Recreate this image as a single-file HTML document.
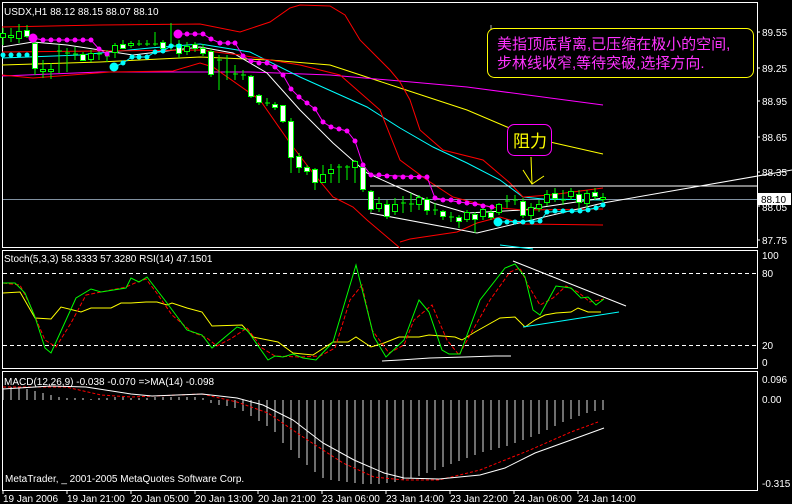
<!DOCTYPE html>
<html><head><meta charset="utf-8"><style>
html,body{margin:0;padding:0;background:#000;}
svg{display:block}
text{font-family:"Liberation Sans","Noto Sans CJK SC",sans-serif;fill:#fff;font-size:10px}
</style></head><body>
<svg width="792" height="504" viewBox="0 0 792 504" xmlns="http://www.w3.org/2000/svg">
<rect width="792" height="504" fill="#000"/>
<!-- frames -->
<g fill="none" stroke="#fff" stroke-width="1">
<rect x="2.5" y="2.5" width="755" height="245"/>
<rect x="2.5" y="250.5" width="755" height="118"/>
<rect x="2.5" y="371.5" width="755" height="119"/>
</g>
<!-- price axis ticks/labels -->
<g stroke="#fff"><line x1="757" y1="32" x2="760" y2="32"/><line x1="757" y1="68" x2="760" y2="68"/><line x1="757" y1="101" x2="760" y2="101"/><line x1="757" y1="137" x2="760" y2="137"/><line x1="757" y1="172" x2="760" y2="172"/><line x1="757" y1="206" x2="760" y2="206"/><line x1="757" y1="240" x2="760" y2="240"/></g>
<text x="762" y="36">89.55</text><text x="762" y="72">89.25</text><text x="762" y="105">88.95</text><text x="762" y="141">88.65</text><text x="762" y="176">88.35</text><text x="762" y="211">88.05</text><text x="762" y="244">87.75</text>
<text x="4" y="15" font-size="10">USDX,H1  88.12 88.15 88.07 88.10</text>

<!-- gray price line -->
<line x1="3" y1="199.5" x2="757" y2="199.5" stroke="#8090a0"/>
<rect x="758" y="193" width="33" height="12" fill="#fff"/>
<text x="761" y="203" style="fill:#000">88.10</text>

<!-- MAs -->
<g fill="none" stroke-width="1">
<polyline stroke="#ffff00" points="2,65 100,62 200,57 270,60 330,65 400,88 467,110 507,127 550,142 603,154"/>
<polyline stroke="#ff00ff" points="2,76 100,72 250,72 330,75 400,81 467,87 603,105"/>
<polyline stroke="#00ffff" points="2,58 80,55 150,48 200,44 250,52 300,77 367,107 400,128 433,147 467,163 500,180 523,197 543,199 603,200"/>
<polyline stroke="#ffffff" points="2,47 33,42 67,45 133,55 200,47 233,53 267,73 300,110 333,143 367,173 400,188 433,203 467,213 523,210 603,198"/>
<polyline stroke="#ff0000" points="2,27 100,25 200,24 240,32 270,22 290,8 300,5 330,6 345,15 360,40 390,70 400,82 410,100 420,130 443,150 483,160 510,183 523,197 550,195 603,188"/>
<polyline stroke="#ff0000" points="2,52 100,51 200,50 240,55 300,65 340,75 380,110 400,160 427,180 453,197 490,207 523,210 603,209"/>
<polyline stroke="#ff0000" points="2,75 33,78 110,72 173,71 200,63 213,67 260,100 290,143 313,173 333,197 353,207 367,220 400,248"/>
<polyline stroke="#ff0000" points="400,242 410,239 457,232 477,223 500,217 523,224 603,225"/>
<!-- white trendlines -->
<polyline stroke="#fff" points="370,186 757,186"/>
<polyline stroke="#fff" points="370,213 477,233"/>
<polyline stroke="#fff" points="477,233 603,203 792,170"/>
<polyline stroke="#00ffff" points="500,245 533,249"/>
</g>

<!-- candles -->
<g stroke="#00ff00" stroke-width="1">
<line x1="3" y1="28" x2="3" y2="45"/><rect x="0.5" y="33.5" width="5" height="4" fill="#000"/>
<line x1="11" y1="28" x2="11" y2="42"/><rect x="8.5" y="35.5" width="5" height="2" fill="#000"/>
<line x1="19" y1="24" x2="19" y2="43"/><rect x="16.5" y="31.5" width="5" height="7" fill="#000"/>
<line x1="27" y1="25" x2="27" y2="38"/><rect x="24.5" y="30.5" width="5" height="6" fill="#fff"/>
<line x1="35" y1="38" x2="35" y2="75"/><rect x="32.5" y="43.5" width="5" height="25" fill="#fff"/>
<line x1="43" y1="60" x2="43" y2="78"/><rect x="40.5" y="69.5" width="5" height="2" fill="#000"/>
<line x1="51" y1="63" x2="51" y2="79"/><rect x="48.5" y="69.5" width="5" height="2" fill="#000"/>
<line x1="59" y1="45" x2="59" y2="73"/><line x1="57" y1="51" x2="62" y2="51"/>
<line x1="67" y1="48" x2="67" y2="72"/><line x1="65" y1="53" x2="70" y2="53"/>
<line x1="75" y1="47" x2="75" y2="60"/><line x1="73" y1="54" x2="78" y2="54"/>
<line x1="83" y1="52" x2="83" y2="60"/><rect x="80.5" y="54.5" width="5" height="6" fill="#fff"/>
<line x1="91" y1="50" x2="91" y2="62"/><rect x="88.5" y="53.5" width="5" height="6" fill="#000"/>
<line x1="99" y1="48" x2="99" y2="60"/><line x1="97" y1="54" x2="102" y2="54"/>
<line x1="107" y1="50" x2="107" y2="62"/><line x1="105" y1="56" x2="110" y2="56"/>
<line x1="115" y1="43" x2="115" y2="58"/><rect x="112.5" y="45.5" width="5" height="7" fill="#000"/>
<line x1="123" y1="40" x2="123" y2="48"/><rect x="120.5" y="44.5" width="5" height="4" fill="#fff"/>
<line x1="131" y1="41" x2="131" y2="48"/><rect x="128.5" y="43.5" width="5" height="2" fill="#000"/>
<line x1="139" y1="40" x2="139" y2="46"/><line x1="137" y1="44" x2="142" y2="44"/>
<line x1="147" y1="40" x2="147" y2="46"/><line x1="145" y1="44" x2="150" y2="44"/>
<line x1="155" y1="32" x2="155" y2="46"/><line x1="153" y1="44" x2="158" y2="44"/>
<line x1="163" y1="40" x2="163" y2="50"/><rect x="160.5" y="42.5" width="5" height="6" fill="#fff"/>
<line x1="171" y1="23" x2="171" y2="50"/><line x1="169" y1="45" x2="174" y2="45"/>
<line x1="179" y1="40" x2="179" y2="58"/><rect x="176.5" y="44.5" width="5" height="9" fill="#fff"/>
<line x1="187" y1="42" x2="187" y2="55"/><rect x="184.5" y="46.5" width="5" height="5" fill="#000"/>
<line x1="195" y1="42" x2="195" y2="52"/><rect x="192.5" y="44.5" width="5" height="4" fill="#fff"/>
<line x1="203" y1="44" x2="203" y2="56"/><rect x="200.5" y="48.5" width="5" height="5" fill="#fff"/>
<line x1="211" y1="48" x2="211" y2="77"/><rect x="208.5" y="51.5" width="5" height="23" fill="#fff"/>
<line x1="219" y1="55" x2="219" y2="90"/><line x1="217" y1="60" x2="222" y2="60"/>
<line x1="227" y1="55" x2="227" y2="80"/><line x1="225" y1="72" x2="230" y2="72"/>
<line x1="235" y1="65" x2="235" y2="80"/><line x1="233" y1="74" x2="238" y2="74"/>
<line x1="243" y1="70" x2="243" y2="80"/><line x1="241" y1="75" x2="246" y2="75"/>
<line x1="251" y1="75" x2="251" y2="98"/><rect x="248.5" y="76.5" width="5" height="20" fill="#fff"/>
<line x1="259" y1="94" x2="259" y2="105"/><rect x="256.5" y="95.5" width="5" height="7" fill="#fff"/>
<line x1="267" y1="98" x2="267" y2="106"/><line x1="265" y1="103" x2="270" y2="103"/>
<line x1="275" y1="102" x2="275" y2="110"/><rect x="272.5" y="104.5" width="5" height="3" fill="#fff"/>
<line x1="283" y1="105" x2="283" y2="123"/><rect x="280.5" y="105.5" width="5" height="16" fill="#fff"/>
<line x1="291" y1="118" x2="291" y2="173"/><rect x="288.5" y="121.5" width="5" height="36" fill="#fff"/>
<line x1="299" y1="153" x2="299" y2="173"/><rect x="296.5" y="156.5" width="5" height="11" fill="#fff"/>
<line x1="307" y1="165" x2="307" y2="175"/><rect x="304.5" y="167.5" width="5" height="4" fill="#fff"/>
<line x1="315" y1="168" x2="315" y2="190"/><rect x="312.5" y="169.5" width="5" height="13" fill="#fff"/>
<line x1="323" y1="165" x2="323" y2="183"/><rect x="320.5" y="174.5" width="5" height="8" fill="#000"/>
<line x1="331" y1="164" x2="331" y2="183"/><rect x="328.5" y="169.5" width="5" height="4" fill="#000"/>
<line x1="339" y1="164" x2="339" y2="183"/><line x1="337" y1="167" x2="342" y2="167"/>
<line x1="347" y1="165" x2="347" y2="180"/><line x1="345" y1="167" x2="350" y2="167"/>
<line x1="355" y1="160" x2="355" y2="183"/><rect x="352.5" y="161.5" width="5" height="6" fill="#000"/>
<line x1="363" y1="165" x2="363" y2="192"/><rect x="360.5" y="167.5" width="5" height="22" fill="#fff"/>
<line x1="371" y1="190" x2="371" y2="212"/><rect x="368.5" y="191.5" width="5" height="18" fill="#fff"/>
<line x1="379" y1="197" x2="379" y2="212"/><rect x="376.5" y="203.5" width="5" height="5" fill="#000"/>
<line x1="387" y1="200" x2="387" y2="219"/><rect x="384.5" y="204.5" width="5" height="12" fill="#fff"/>
<line x1="395" y1="198" x2="395" y2="215"/><rect x="392.5" y="204.5" width="5" height="7" fill="#000"/>
<line x1="403" y1="196" x2="403" y2="213"/><line x1="401" y1="203" x2="406" y2="203"/>
<line x1="411" y1="193" x2="411" y2="212"/><line x1="409" y1="204" x2="414" y2="204"/>
<line x1="419" y1="195" x2="419" y2="210"/><rect x="416.5" y="197.5" width="5" height="7" fill="#000"/>
<line x1="427" y1="197" x2="427" y2="215"/><rect x="424.5" y="199.5" width="5" height="11" fill="#fff"/>
<line x1="435" y1="203" x2="435" y2="215"/><line x1="433" y1="210" x2="438" y2="210"/>
<line x1="443" y1="210" x2="443" y2="220"/><rect x="440.5" y="211.5" width="5" height="5" fill="#fff"/>
<line x1="451" y1="212" x2="451" y2="222"/><line x1="449" y1="217" x2="454" y2="217"/>
<line x1="459" y1="215" x2="459" y2="228"/><rect x="456.5" y="217.5" width="5" height="4" fill="#fff"/>
<line x1="467" y1="210" x2="467" y2="222"/><rect x="464.5" y="212.5" width="5" height="7" fill="#000"/>
<line x1="475" y1="212" x2="475" y2="233"/><rect x="472.5" y="214.5" width="5" height="5" fill="#fff"/>
<line x1="483" y1="207" x2="483" y2="220"/><rect x="480.5" y="209.5" width="5" height="7" fill="#000"/>
<line x1="491" y1="208" x2="491" y2="220"/><rect x="488.5" y="212.5" width="5" height="5" fill="#fff"/>
<line x1="499" y1="203" x2="499" y2="215"/><rect x="496.5" y="204.5" width="5" height="8" fill="#000"/>
<line x1="507" y1="195" x2="507" y2="208"/><line x1="505" y1="201" x2="510" y2="201"/>
<line x1="515" y1="195" x2="515" y2="205"/><line x1="513" y1="200" x2="518" y2="200"/>
<line x1="523" y1="198" x2="523" y2="218"/><rect x="520.5" y="201.5" width="5" height="14" fill="#fff"/>
<line x1="531" y1="203" x2="531" y2="220"/><rect x="528.5" y="207.5" width="5" height="8" fill="#000"/>
<line x1="539" y1="200" x2="539" y2="212"/><rect x="536.5" y="204.5" width="5" height="4" fill="#000"/>
<line x1="547" y1="190" x2="547" y2="206"/><rect x="544.5" y="194.5" width="5" height="8" fill="#000"/>
<line x1="555" y1="188" x2="555" y2="202"/><rect x="552.5" y="193.5" width="5" height="5" fill="#fff"/>
<line x1="563" y1="190" x2="563" y2="205"/><line x1="561" y1="200" x2="566" y2="200"/>
<line x1="571" y1="188" x2="571" y2="200"/><rect x="568.5" y="191.5" width="5" height="5" fill="#000"/>
<line x1="579" y1="190" x2="579" y2="210"/><rect x="576.5" y="194.5" width="5" height="8" fill="#fff"/>
<line x1="587" y1="190" x2="587" y2="210"/><rect x="584.5" y="193.5" width="5" height="10" fill="#000"/>
<line x1="595" y1="188" x2="595" y2="200"/><rect x="592.5" y="192.5" width="5" height="4" fill="#fff"/>
<line x1="603" y1="193" x2="603" y2="202"/><rect x="600.5" y="197.5" width="5" height="2" fill="#000"/>
</g>

<!-- SAR dots -->
<polyline fill="none" stroke="#ff00ff" points="33,38 43,40 91,40 99,49 107,54"/>
<polyline fill="none" stroke="#ff00ff" points="178,34 203,34 211,39 220,43 235,43 243,56 251,61 267,63 275,67 283,75 291,89 299,97 307,103 315,109 323,122 331,127 347,131 355,141 363,165 371,175 427,177 435,198 459,202 467,203 475,204 492,207"/>
<g fill="#ff00ff">
<circle cx="33" cy="38" r="4.5"/><circle cx="178" cy="34" r="4.5"/>
<circle cx="43" cy="40" r="2.5"/><circle cx="51" cy="40" r="2.5"/><circle cx="59" cy="40" r="2.5"/><circle cx="67" cy="40" r="2.5"/><circle cx="75" cy="40" r="2.5"/><circle cx="83" cy="40" r="2.5"/><circle cx="91" cy="40" r="2.5"/><circle cx="99" cy="49" r="2.5"/><circle cx="107" cy="54" r="2.5"/>
<circle cx="187" cy="34" r="2.5"/><circle cx="195" cy="34" r="2.5"/><circle cx="203" cy="34" r="2.5"/><circle cx="211" cy="39" r="2.5"/><circle cx="220" cy="43" r="2.5"/><circle cx="228" cy="43" r="2.5"/><circle cx="235" cy="43" r="2.5"/><circle cx="243" cy="56" r="2.5"/><circle cx="251" cy="61" r="2.5"/><circle cx="259" cy="63" r="2.5"/><circle cx="267" cy="63" r="2.5"/><circle cx="275" cy="67" r="2.5"/><circle cx="283" cy="75" r="2.5"/><circle cx="291" cy="89" r="2.5"/><circle cx="299" cy="97" r="2.5"/><circle cx="307" cy="103" r="2.5"/><circle cx="315" cy="109" r="2.5"/><circle cx="323" cy="122" r="2.5"/><circle cx="331" cy="127" r="2.5"/><circle cx="339" cy="129" r="2.5"/><circle cx="347" cy="131" r="2.5"/><circle cx="355" cy="141" r="2.5"/><circle cx="363" cy="165" r="2.5"/><circle cx="371" cy="175" r="2.5"/><circle cx="379" cy="175" r="2.5"/><circle cx="387" cy="176" r="2.5"/><circle cx="395" cy="177" r="2.5"/><circle cx="403" cy="177" r="2.5"/><circle cx="411" cy="177" r="2.5"/><circle cx="419" cy="177" r="2.5"/><circle cx="427" cy="177" r="2.5"/><circle cx="435" cy="198" r="2.5"/><circle cx="443" cy="200" r="2.5"/><circle cx="451" cy="200" r="2.5"/><circle cx="459" cy="202" r="2.5"/><circle cx="467" cy="203" r="2.5"/><circle cx="475" cy="204" r="2.5"/><circle cx="483" cy="206" r="2.5"/><circle cx="492" cy="207" r="2.5"/>
</g>
<polyline fill="none" stroke="#00ffff" points="114,67 123,63 132,57 147,57 155,52 163,51 171,46 179,46"/>
<polyline fill="none" stroke="#00ffff" points="498,222 540,221 547,212 580,211 596,208 603,205"/>
<g fill="#00ffff">
<circle cx="3" cy="55" r="2.5"/><circle cx="11" cy="55" r="2.5"/><circle cx="19" cy="55" r="2.5"/><circle cx="27" cy="55" r="2.5"/>
<circle cx="114" cy="67" r="4.5"/><circle cx="123" cy="63" r="2.5"/><circle cx="132" cy="57" r="2.5"/><circle cx="139" cy="57" r="2.5"/><circle cx="147" cy="57" r="2.5"/><circle cx="155" cy="52" r="2.5"/><circle cx="163" cy="51" r="2.5"/><circle cx="171" cy="46" r="2.5"/><circle cx="179" cy="46" r="2.5"/>
<circle cx="498" cy="222" r="4.5"/><circle cx="507" cy="222" r="2.5"/><circle cx="515" cy="222" r="2.5"/><circle cx="523" cy="222" r="2.5"/><circle cx="532" cy="222" r="2.5"/><circle cx="540" cy="221" r="2.5"/><circle cx="547" cy="212" r="2.5"/><circle cx="555" cy="211" r="2.5"/><circle cx="563" cy="211" r="2.5"/><circle cx="572" cy="211" r="2.5"/><circle cx="580" cy="211" r="2.5"/><circle cx="588" cy="210" r="2.5"/><circle cx="596" cy="208" r="2.5"/><circle cx="603" cy="205" r="2.5"/>
</g>

<!-- annotations -->
<line x1="491" y1="25" x2="491" y2="31" stroke="#aaa"/>
<rect x="487.5" y="28.5" width="266" height="49" rx="7" fill="#000" stroke="#ffff00"/>
<text x="497" y="49" style="fill:#ff33ff;font-size:15px">美指顶底背离,已压缩在极小的空间,</text>
<text x="497" y="68" style="fill:#ff33ff;font-size:15px">步林线收窄,等待突破,选择方向.</text>
<rect x="507.5" y="124.5" width="44" height="31" rx="7" fill="#000" stroke="#ff00ff"/>
<text x="513" y="147" style="fill:#ffff00;font-size:17px">阻力</text>
<polyline fill="none" stroke="#ffff00" points="531,157 532,184"/>
<polyline fill="none" stroke="#ffff00" points="523,170 532,184 544,176"/>

<!-- Stoch panel -->
<g stroke="#fff" stroke-dasharray="4,3"><line x1="3" y1="273.5" x2="757" y2="273.5"/><line x1="3" y1="345.5" x2="757" y2="345.5"/></g>
<text x="4" y="262" font-size="9">Stoch(5,3,3) 58.3333 57.3280  RSI(14) 47.1501</text>
<text x="762" y="259">100</text><text x="762" y="277">80</text><text x="762" y="349">20</text><text x="762" y="366">0</text>
<g fill="none" stroke-width="1">
<polyline stroke="#ffff00" points="3,293 20,292 35,318 51,319 61,307 81,312 91,308 111,308 121,303 131,303 146,302 157,302 167,305 172,303 187,308 202,312 212,326 242,325 253,337 278,342 293,353 313,355 333,342 348,342 356,337 371,347 384,343 399,337 419,337 429,335 455,337 462,340 475,332 500,318 515,317 525,327 535,320 545,315 556,313 571,312 578,308 588,312 601,312"/>
<polyline stroke="#ff0000" stroke-dasharray="4,2" points="3,283 20,285 30,305 45,340 56,347 71,323 86,295 101,292 126,287 135,283 146,279 156,292 172,315 192,332 207,338 217,346 232,338 247,328 262,348 275,356 300,357 320,356 335,348 350,300 362,285 372,330 389,353 404,345 414,320 432,305 447,340 459,355 470,335 490,300 510,272 520,268 528,285 540,305 553,298 566,286 578,292 590,302 604,299"/>
<polyline stroke="#00ff00" points="3,283 15,283 25,293 35,317 45,348 51,353 76,298 91,289 101,292 126,288 131,278 139,282 147,277 167,303 187,330 202,335 212,348 237,327 247,330 268,360 275,356 283,357 293,354 303,358 316,360 333,342 356,265 374,337 386,357 404,340 419,300 429,312 442,350 449,354 460,354 480,300 505,268 515,264 525,277 533,310 540,315 556,286 571,288 581,298 588,297 596,305 604,299"/>
<polyline stroke="#fff" points="513,261 626,306"/>
<polyline stroke="#fff" points="382,361 400,360 430,358 465,357 495,356 511,356"/>
<polyline stroke="#00ffff" points="523,327 619,312"/>
</g>

<!-- MACD panel -->
<text x="4" y="385" font-size="9">MACD(12,26,9) -0.038 -0.070  =&gt;MA(14) -0.098</text>
<text x="762" y="383">0.096</text><text x="762" y="403">0.00</text><text x="762" y="487">-0.315</text>
<g stroke="#ddd" stroke-width="1">
<line x1="3" y1="400" x2="3" y2="388"/><line x1="11" y1="400" x2="11" y2="387"/><line x1="19" y1="400" x2="19" y2="388"/><line x1="27" y1="400" x2="27" y2="389"/><line x1="35" y1="400" x2="35" y2="391"/><line x1="43" y1="400" x2="43" y2="393"/><line x1="51" y1="400" x2="51" y2="395"/><line x1="59" y1="400" x2="59" y2="397"/><line x1="67" y1="400" x2="67" y2="398"/><line x1="75" y1="400" x2="75" y2="398"/><line x1="83" y1="400" x2="83" y2="398"/><line x1="91" y1="400" x2="91" y2="399"/><line x1="99" y1="400" x2="99" y2="398"/><line x1="107" y1="400" x2="107" y2="398"/><line x1="115" y1="400" x2="115" y2="397"/><line x1="123" y1="400" x2="123" y2="397"/><line x1="131" y1="400" x2="131" y2="398"/><line x1="139" y1="400" x2="139" y2="398"/><line x1="147" y1="400" x2="147" y2="398"/><line x1="155" y1="400" x2="155" y2="397"/><line x1="163" y1="400" x2="163" y2="397"/><line x1="171" y1="400" x2="171" y2="397"/><line x1="179" y1="400" x2="179" y2="397"/><line x1="187" y1="400" x2="187" y2="397"/><line x1="195" y1="400" x2="195" y2="397"/><line x1="203" y1="400" x2="203" y2="398"/>
<line x1="211" y1="400" x2="211" y2="403"/><line x1="219" y1="400" x2="219" y2="405"/><line x1="227" y1="400" x2="227" y2="406"/><line x1="235" y1="400" x2="235" y2="408"/><line x1="243" y1="400" x2="243" y2="411"/><line x1="251" y1="400" x2="251" y2="416"/><line x1="259" y1="400" x2="259" y2="421"/><line x1="267" y1="400" x2="267" y2="426"/><line x1="275" y1="400" x2="275" y2="432"/><line x1="283" y1="400" x2="283" y2="443"/><line x1="291" y1="400" x2="291" y2="450"/><line x1="299" y1="400" x2="299" y2="458"/><line x1="307" y1="400" x2="307" y2="465"/><line x1="315" y1="400" x2="315" y2="472"/><line x1="323" y1="400" x2="323" y2="478"/><line x1="331" y1="400" x2="331" y2="480"/><line x1="339" y1="400" x2="339" y2="481"/><line x1="347" y1="400" x2="347" y2="482"/><line x1="355" y1="400" x2="355" y2="483"/><line x1="363" y1="400" x2="363" y2="484"/><line x1="371" y1="400" x2="371" y2="484"/><line x1="379" y1="400" x2="379" y2="484"/><line x1="387" y1="400" x2="387" y2="483"/><line x1="395" y1="400" x2="395" y2="482"/><line x1="403" y1="400" x2="403" y2="480"/><line x1="411" y1="400" x2="411" y2="478"/><line x1="419" y1="400" x2="419" y2="476"/><line x1="427" y1="400" x2="427" y2="473"/><line x1="435" y1="400" x2="435" y2="470"/><line x1="443" y1="400" x2="443" y2="467"/><line x1="451" y1="400" x2="451" y2="464"/><line x1="459" y1="400" x2="459" y2="461"/><line x1="467" y1="400" x2="467" y2="458"/><line x1="475" y1="400" x2="475" y2="455"/><line x1="483" y1="400" x2="483" y2="452"/><line x1="491" y1="400" x2="491" y2="450"/><line x1="499" y1="400" x2="499" y2="448"/><line x1="507" y1="400" x2="507" y2="446"/><line x1="515" y1="400" x2="515" y2="443"/><line x1="523" y1="400" x2="523" y2="440"/><line x1="531" y1="400" x2="531" y2="437"/><line x1="539" y1="400" x2="539" y2="434"/><line x1="547" y1="400" x2="547" y2="430"/><line x1="555" y1="400" x2="555" y2="426"/><line x1="563" y1="400" x2="563" y2="422"/><line x1="571" y1="400" x2="571" y2="419"/><line x1="579" y1="400" x2="579" y2="416"/><line x1="587" y1="400" x2="587" y2="413"/><line x1="595" y1="400" x2="595" y2="411"/><line x1="603" y1="400" x2="603" y2="410"/>
</g>
<polyline fill="none" stroke="#ff0000" stroke-dasharray="3,2" points="3,387 66,387 101,395 131,397 202,394 237,402 268,413 303,437 343,463 374,477 404,480 439,480 480,470 530,450 571,432 598,422"/>
<polyline fill="none" stroke="#fff" points="3,389 51,386 86,387 131,394 152,396 202,394 237,398 263,405 293,420 323,443 354,460 384,473 404,478 439,479 480,475 505,468 535,453 571,440 604,428"/>
<text x="5" y="482" font-size="9">MetaTrader, _ 2001-2005 MetaQuotes Software Corp.</text>

<!-- time axis -->
<g stroke="#fff"><line x1="3" y1="491" x2="3" y2="494"/><line x1="67" y1="491" x2="67" y2="494"/><line x1="131" y1="491" x2="131" y2="494"/><line x1="195" y1="491" x2="195" y2="494"/><line x1="258" y1="491" x2="258" y2="494"/><line x1="322" y1="491" x2="322" y2="494"/><line x1="386" y1="491" x2="386" y2="494"/><line x1="450" y1="491" x2="450" y2="494"/><line x1="514" y1="491" x2="514" y2="494"/><line x1="578" y1="491" x2="578" y2="494"/></g>
<g font-size="9">
<text x="3" y="502">19 Jan 2006</text><text x="67" y="502">19 Jan 21:00</text><text x="131" y="502">20 Jan 05:00</text><text x="195" y="502">20 Jan 13:00</text><text x="258" y="502">20 Jan 21:00</text><text x="322" y="502">23 Jan 06:00</text><text x="386" y="502">23 Jan 14:00</text><text x="450" y="502">23 Jan 22:00</text><text x="514" y="502">24 Jan 06:00</text><text x="578" y="502">24 Jan 14:00</text>
</g>
</svg>
</body></html>
